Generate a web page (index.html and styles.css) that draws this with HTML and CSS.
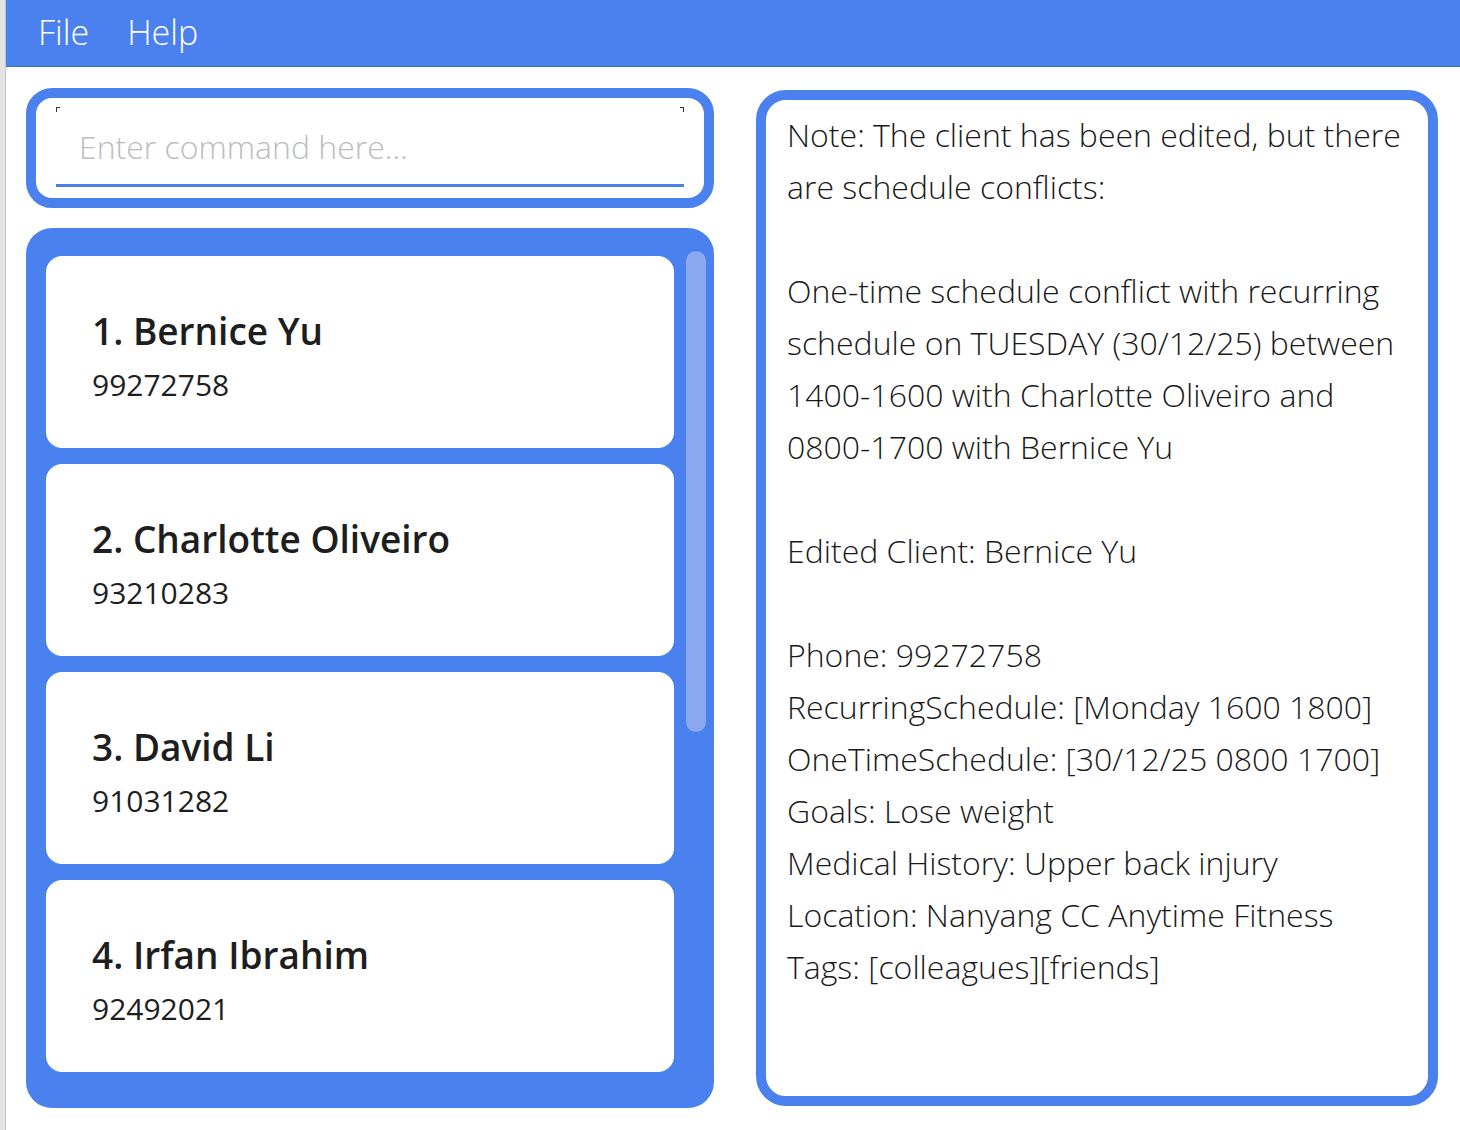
FILE: index.html
```html
<!DOCTYPE html>
<html>
<head>
<meta charset="utf-8">
<link rel="stylesheet" href="styles.css">
</head>
<body>
<div class="app">
  <div class="edge"></div>
  <div class="window">
    <div class="menubar">
      <span class="menu-item">File</span>
      <span class="menu-item">Help</span>
    </div>
    <div class="content">
      <div class="left">
        <div class="command-box">
          <div class="command-field">
            <span class="placeholder">Enter command here...</span>
          </div>
        </div>
        <div class="list-panel">
          <div class="list">
            <div class="card">
              <div class="card-name">1. Bernice Yu</div>
              <div class="card-phone">99272758</div>
            </div>
            <div class="card">
              <div class="card-name">2. Charlotte Oliveiro</div>
              <div class="card-phone">93210283</div>
            </div>
            <div class="card">
              <div class="card-name">3. David Li</div>
              <div class="card-phone">91031282</div>
            </div>
            <div class="card">
              <div class="card-name">4. Irfan Ibrahim</div>
              <div class="card-phone">92492021</div>
            </div>
          </div>
          <div class="scroll-track"><div class="scroll-thumb"></div></div>
        </div>
      </div>
      <div class="result-panel">
        <div class="result-text">Note: The client has been edited, but there
are schedule conflicts:

One-time schedule conflict with recurring
schedule on TUESDAY (30/12/25) between
1400-1600 with Charlotte Oliveiro and
0800-1700 with Bernice Yu

Edited Client: Bernice Yu

Phone: 99272758
RecurringSchedule: [Monday 1600 1800]
OneTimeSchedule: [30/12/25 0800 1700]
Goals: Lose weight
Medical History: Upper back injury
Location: Nanyang CC Anytime Fitness
Tags: [colleagues][friends]</div>
      </div>
    </div>
  </div>
</div>
</body>
</html>
```

FILE: styles.css
```css
html, body {
  margin: 0;
  padding: 0;
  width: 1460px;
  height: 1130px;
  overflow: hidden;
  background: #ffffff;
}

.app {
  display: flex;
  width: 1460px;
  height: 1130px;
  font-family: "Open Sans", "Noto Sans", sans-serif;
}

.edge {
  width: 5px;
  background: #e4e4e4;
  border-right: 1px solid #c4c4c4;
  flex: none;
}

.window {
  flex: 1;
  display: flex;
  flex-direction: column;
  background: #ffffff;
}

.menubar {
  height: 67px;
  background: #4a81ef;
  border-bottom: 1px solid #3a7c93;
  display: flex;
  align-items: center;
  padding-left: 32px;
  gap: 38px;
  box-sizing: border-box;
  flex: none;
}

.menu-item {
  color: #ffffff;
  font-size: 34px;
  font-weight: 300;
  line-height: 1;
  margin-top: -2px;
}

.content {
  display: flex;
  padding: 21px 0 0 20px;
  gap: 42px;
}

.left {
  width: 688px;
  display: flex;
  flex-direction: column;
  gap: 20px;
}

.command-box {
  height: 120px;
  box-sizing: border-box;
  border: 10px solid #4a81ef;
  border-radius: 26px;
  padding: 9px 20px 11px 20px;
}

.command-field {
  position: relative;
  height: 80px;
  box-sizing: border-box;
  border-bottom: 3px solid #4a81ef;
  display: flex;
  align-items: center;
  padding-left: 23px;
}

.command-field::before,
.command-field::after {
  content: "";
  position: absolute;
  top: 0;
  width: 3px;
  height: 4px;
  border-top: 1px solid #333;
}
.command-field::before { left: 0; border-left: 1px solid #333; }
.command-field::after { right: 0; border-right: 1px solid #333; }

.placeholder {
  font-size: 32px;
  font-weight: 300;
  color: #bcbcbc;
  margin-top: 1px;
}

.list-panel {
  height: 880px;
  background: #4a81ef;
  border-radius: 26px;
  display: flex;
  padding: 28px 8px 0 20px;
  box-sizing: border-box;
  gap: 12px;
  overflow: hidden;
}

.list {
  width: 628px;
  display: flex;
  flex-direction: column;
  gap: 16px;
}

.card {
  height: 192px;
  flex: none;
  background: #ffffff;
  border-radius: 16px;
  padding: 51px 0 0 46px;
  box-sizing: border-box;
  color: #1e1e1e;
}

.card-name {
  font-size: 37px;
  font-weight: 600;
  line-height: 48px;
}

.card-phone {
  font-size: 30px;
  font-weight: 400;
  line-height: 40px;
  margin-top: 10px;
}

.scroll-track {
  width: 20px;
  margin-top: -5px;
}

.scroll-thumb {
  width: 20px;
  height: 481px;
  border-radius: 10px;
  background: #8aa9f1;
}

.result-panel {
  width: 682px;
  height: 1016px;
  margin-top: 2px;
  box-sizing: border-box;
  border: 10px solid #4a81ef;
  border-radius: 30px;
  padding: 9px 10px 0 21px;
}

.result-text {
  white-space: pre;
  font-size: 32px;
  font-weight: 300;
  line-height: 52px;
  color: #1a1a1a;
}
```
